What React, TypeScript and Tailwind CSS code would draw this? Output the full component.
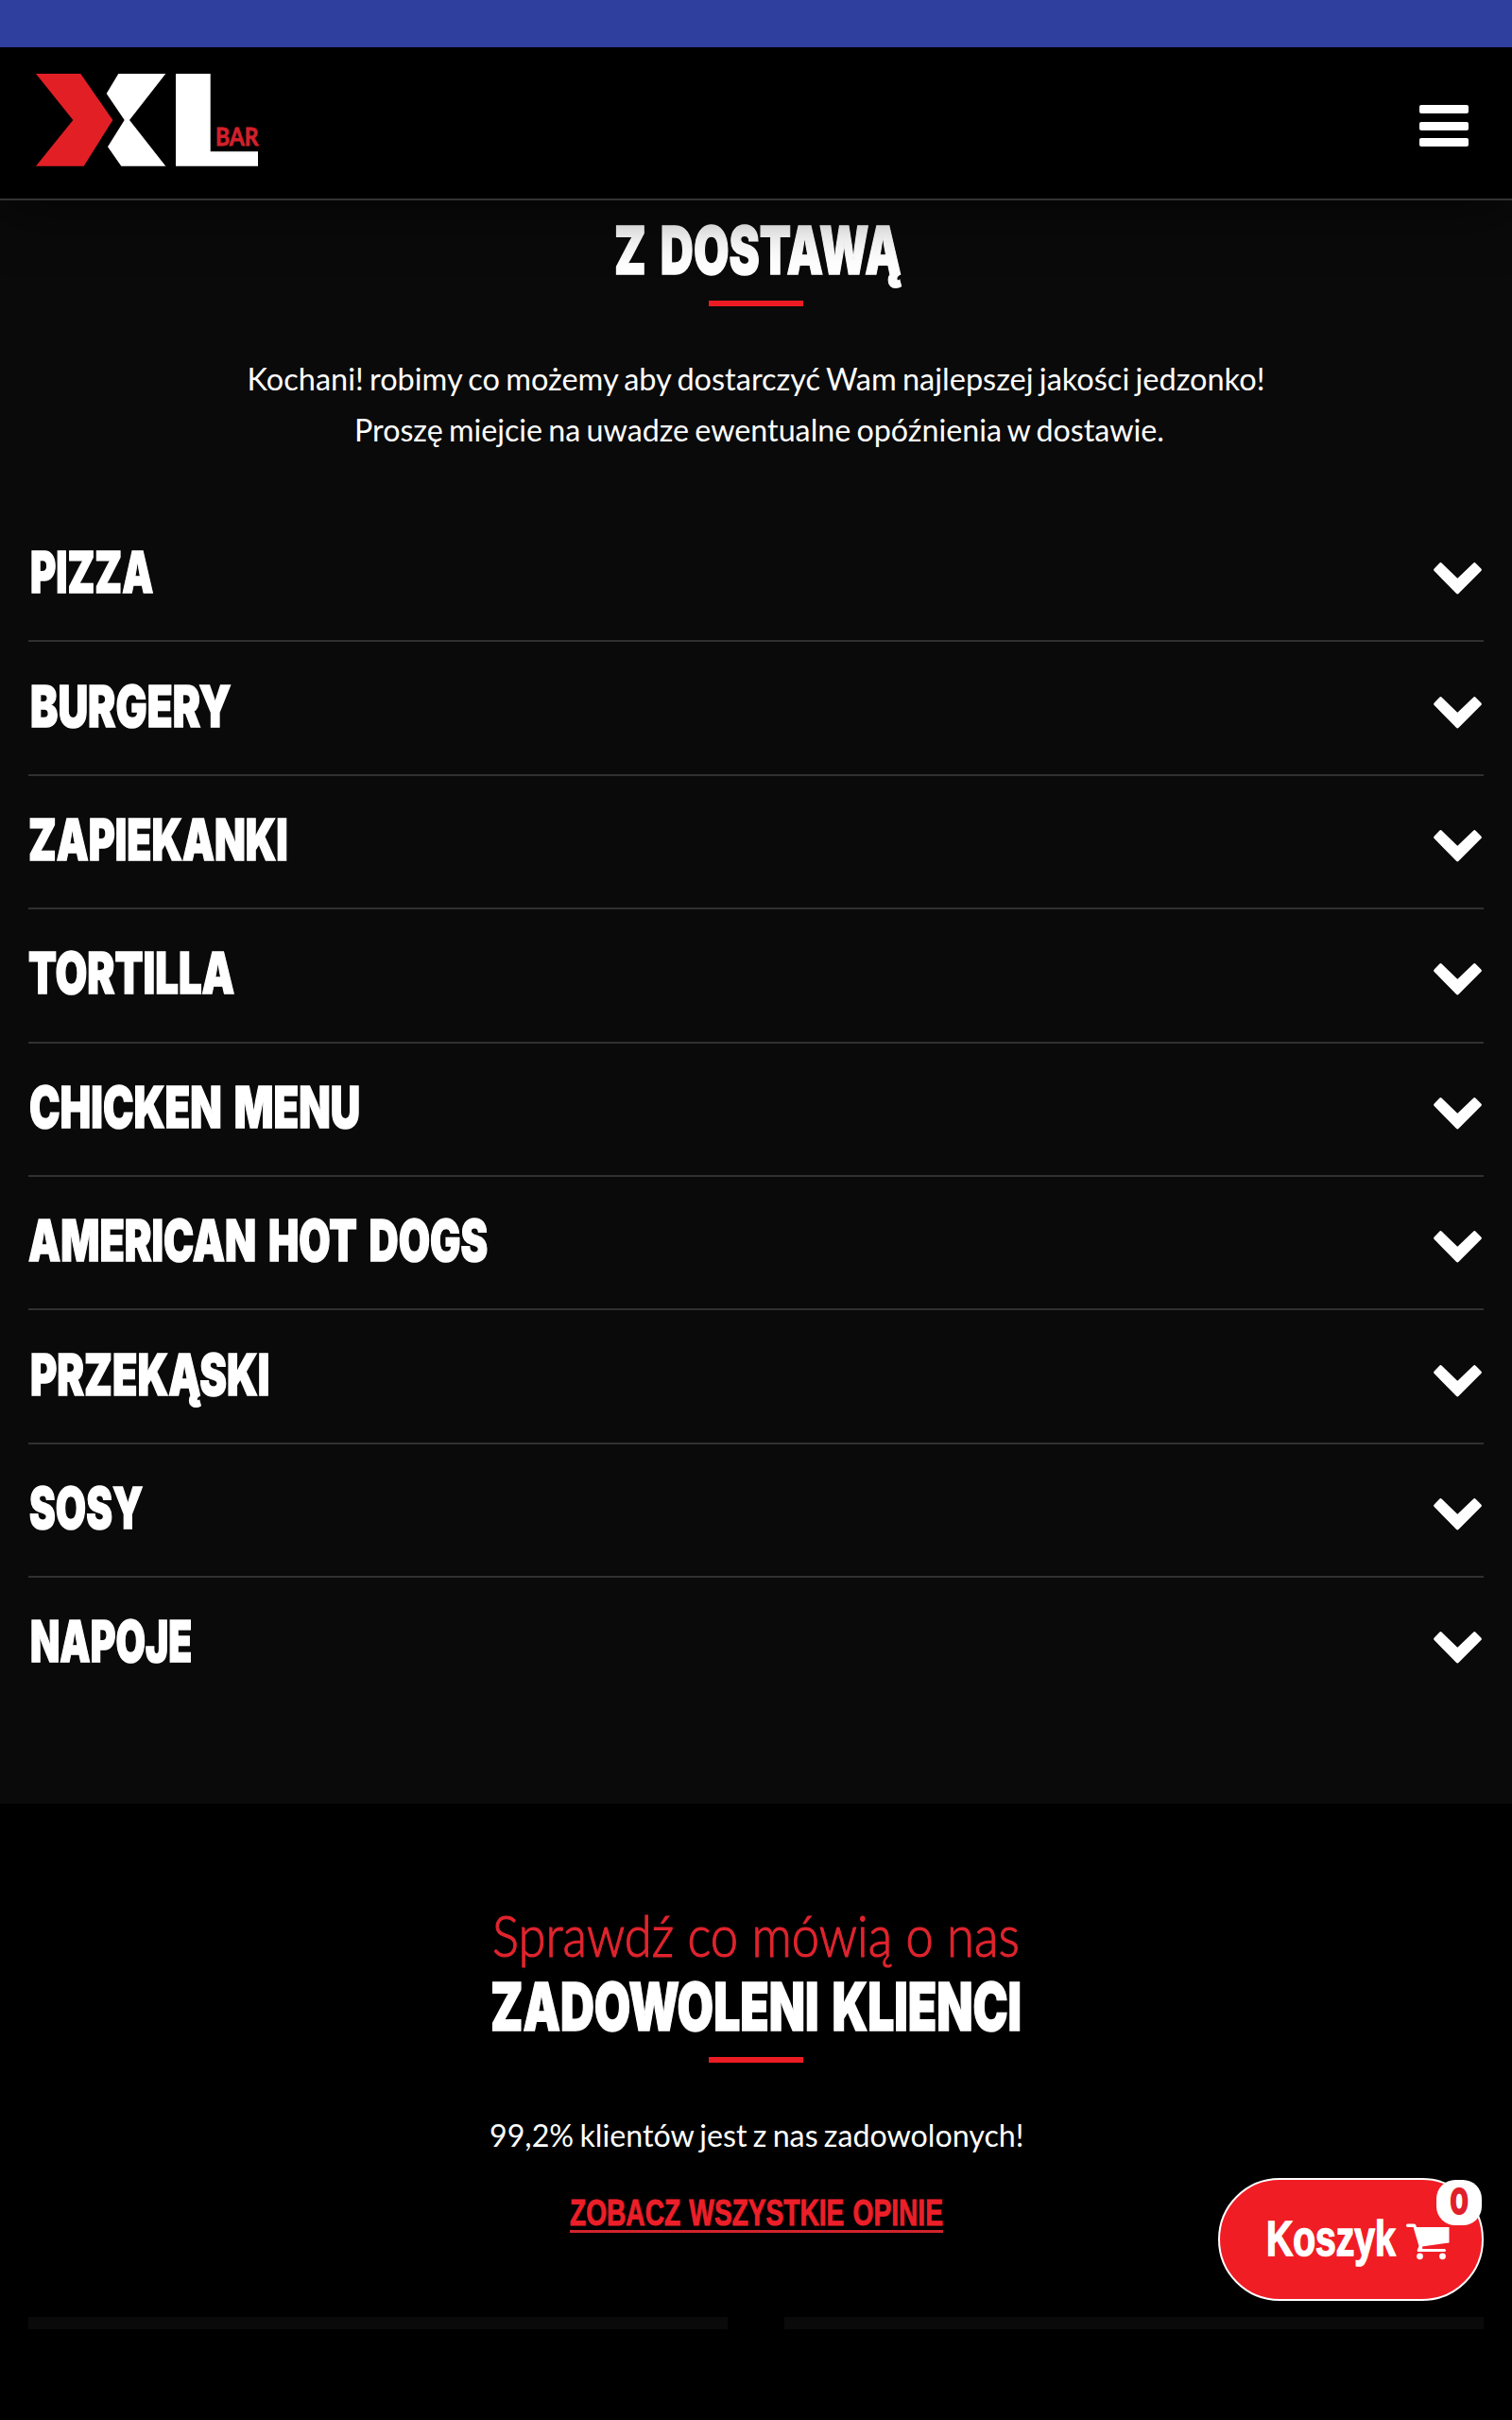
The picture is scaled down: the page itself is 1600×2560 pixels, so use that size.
import { useLayoutEffect, useRef, useState } from "react";
import clsx from "clsx";

interface Category {
  name: string;
  size: string;
}

const CATEGORIES: Category[] = [
  { name: "PIZZA", size: "ml-[2px] w-[130px]" },
  { name: "BURGERY", size: "ml-[2px] w-[213px]" },
  { name: "ZAPIEKANKI", size: "w-[275px]" },
  { name: "TORTILLA", size: "w-[218px]" },
  { name: "CHICKEN MENU", size: "ml-[1px] w-[350px]" },
  { name: "AMERICAN HOT DOGS", size: "w-[486px]" },
  { name: "PRZEKĄSKI", size: "ml-[2px] w-[253px]" },
  { name: "SOSY", size: "ml-[1px] w-[120px]" },
  { name: "NAPOJE", size: "ml-[2px] w-[171px]" },
];

// Condenses a line of text horizontally so that it fills its box.
function FitText({ text, className }: { text: string; className: string }) {
  const box = useRef<HTMLSpanElement>(null);
  const line = useRef<HTMLSpanElement>(null);
  const [scale, setScale] = useState(1);

  useLayoutEffect(() => {
    if (!box.current || !line.current) return;
    setScale(box.current.clientWidth / line.current.offsetWidth);
  }, [text]);

  return (
    <span ref={box} className={clsx("block whitespace-nowrap", className)}>
      <span
        ref={line}
        className="inline-block origin-left"
        style={{ transform: `scaleX(${scale})` }}
      >
        {text}
      </span>
    </span>
  );
}

function Logo() {
  return (
    <svg viewBox="0 0 240 100" className="h-[100px] w-[240px]">
      <path d="M0 0H47.3L81.3 49L50.7 97.7H0L39.3 49Z" fill="#e31f26" />
      <path
        d="M87.3 0H137.3L99 49L137.3 97.7H90.3L76 77.3L93.7 49L74.7 21Z"
        fill="#fff"
      />
      <path d="M148 0H184.7V82.3H235V97.7H148Z" fill="#fff" />
      <text
        x="190"
        y="75.5"
        textLength="45.5"
        lengthAdjust="spacingAndGlyphs"
        className="font-['Lato',sans-serif] text-[26px] font-bold"
        fill="#d4202c"
        stroke="#d4202c"
        strokeWidth="0.8"
      >
        BAR
      </text>
    </svg>
  );
}

function MenuButton() {
  return (
    <button className="flex w-[52px] flex-col gap-[8.5px]" aria-label="Menu">
      <span className="h-[9px] w-full rounded-[2px] bg-white" />
      <span className="h-[9px] w-full rounded-[2px] bg-white" />
      <span className="h-[9px] w-full rounded-[2px] bg-white" />
    </button>
  );
}

function Chevron() {
  return (
    <svg viewBox="0 0 51 34" className="h-[34px] w-[51px]">
      <path
        d="M2 7.7L7.5 2L25.3 19.2L43.3 2L49 7.7L25.3 31.5Z"
        fill="#fff"
        stroke="#fff"
        strokeWidth="3.6"
        strokeLinejoin="round"
      />
    </svg>
  );
}

function CartIcon() {
  return (
    <svg viewBox="0 0 46 39" className="h-[39px] w-[46px]" fill="#fff">
      <path d="M1.5 0.5H8.5Q10 0.5 10.4 2L11 4H45.5V20.5L17 24.5L17.3 27H40.5Q42 27 42 28.5Q42 30 40.5 30H13Q11.5 30 11.7 28.3L13.5 24L7.6 4H1.5Q0 4 0 2.2Q0 0.5 1.5 0.5Z" />
      <circle cx="14.5" cy="34.8" r="3.4" />
      <circle cx="38.5" cy="34.8" r="3.4" />
    </svg>
  );
}

function MenuSection() {
  return (
    <section className="h-[1696px] bg-[#0a0a0a] px-[30px] pt-[16px]">
      <div className="flex flex-col items-center">
        <FitText
          text="Z DOSTAWĄ"
          className="ml-[3px] h-[72px] w-[304px] font-['Inter',sans-serif] text-[70px] leading-[73px] font-black [word-spacing:8px] [-webkit-text-stroke:1.5px_white]"
        />
        <div className="mt-[18px] h-[6px] w-[100px] bg-[#ec1c24]" />
        <div className="mt-[50px] flex flex-col items-center text-[32.5px] leading-[54px] [word-spacing:-2px]">
          <FitText
            text="Kochani! robimy co możemy aby dostarczyć Wam najlepszej jakości jedzonko!"
            className="w-[1077px]"
          />
          <FitText
            text="Proszę miejcie na uwadze ewentualne opóźnienia w dostawie."
            className="ml-[7px] w-[857px]"
          />
        </div>
      </div>
      <ul className="mt-[56px]">
        {CATEGORIES.map((category, i) => (
          <li
            key={category.name}
            className={clsx(
              "flex h-[141.4px] items-center justify-between pr-[2px]",
              i < CATEGORIES.length - 1
                ? "border-b-2 border-[#303030]"
                : "pb-[2px]",
            )}
          >
            <FitText
              text={category.name}
              className={clsx(
                "mb-[5px] h-[64px] font-['Inter',sans-serif] text-[60.5px] leading-[64px] font-black [word-spacing:6px] [-webkit-text-stroke:1.5px_white]",
                category.size,
              )}
            />
            <span className="mt-[9px]">
              <Chevron />
            </span>
          </li>
        ))}
      </ul>
    </section>
  );
}

function ReviewsSection() {
  return (
    <section className="h-[652px] bg-black px-[30px] pt-[98px]">
      <div className="flex flex-col items-center">
        <FitText
          text="Sprawdź co mówią o nas"
          className="h-[80px] w-[558px] font-['Lato',sans-serif] text-[61px] leading-[82px] font-light text-[#e0242e] [-webkit-text-stroke:1.2px_#e0242e]"
        />
        <FitText
          text="ZADOWOLENI KLIENCI"
          className="h-[72px] w-[562px] font-['Inter',sans-serif] text-[70px] leading-[73px] font-black [word-spacing:6px] [-webkit-text-stroke:1.5px_white]"
        />
        <div className="mt-[18px] h-[6px] w-[100px] bg-[#ec1c24]" />
        <div className="mt-[50px] text-[32.5px] leading-[54px] [word-spacing:-2px]">
          <FitText
            text="99,2% klientów jest z nas zadowolonych!"
            className="w-[565px]"
          />
        </div>
        <a className="mt-[25px] block border-b-[3px] border-[#d3232d] text-[#ec1f29]">
          <FitText
            text="ZOBACZ WSZYSTKIE OPINIE"
            className="h-[48px] w-[395px] font-['Liberation_Sans_Narrow',sans-serif] text-[39px] leading-[59px] font-bold [word-spacing:2px] [-webkit-text-stroke:1px_#ec1f29]"
          />
        </a>
      </div>
      <div className="mt-[89px] flex gap-[60px]">
        <div className="h-[13px] flex-1 bg-[#0a0a0a]" />
        <div className="h-[13px] flex-1 bg-[#0a0a0a]" />
      </div>
    </section>
  );
}

function CartButton() {
  return (
    <button className="absolute top-[2304px] left-[1289px] flex h-[130px] w-[281px] items-center rounded-full border-2 border-white bg-[#f01d25] pl-[49px]">
      <FitText
        text="Koszyk"
        className="h-[60px] w-[137px] text-left font-['Liberation_Sans_Narrow',sans-serif] text-[51px] leading-[59px] font-bold [-webkit-text-stroke:1.6px_white]"
      />
      <span className="mt-[5px] ml-[11px]">
        <CartIcon />
      </span>
      <span className="absolute top-0 right-0 flex h-[48px] w-[48px] justify-center rounded-[20px] bg-white text-[#e0202a]">
        <FitText
          text="0"
          className="h-[46px] w-[20px] text-left font-['Inter',sans-serif] text-[40px] leading-[45px] font-black"
        />
      </span>
    </button>
  );
}

export default function App() {
  return (
    <div className="relative h-[2560px] w-[1600px] overflow-hidden bg-black font-['Lato',sans-serif] text-white">
      <div className="relative z-20 h-[50px] bg-[#2e3f9e]" />
      <header className="relative z-10 flex h-[162px] items-start justify-between border-b-2 border-[#333] bg-black pt-[28px] pr-[46px] pl-[38px] shadow-[0_10px_60px_rgba(0,0,0,0.55)]">
        <Logo />
        <div className="mt-[33px]">
          <MenuButton />
        </div>
      </header>
      <MenuSection />
      <ReviewsSection />
      <CartButton />
    </div>
  );
}
